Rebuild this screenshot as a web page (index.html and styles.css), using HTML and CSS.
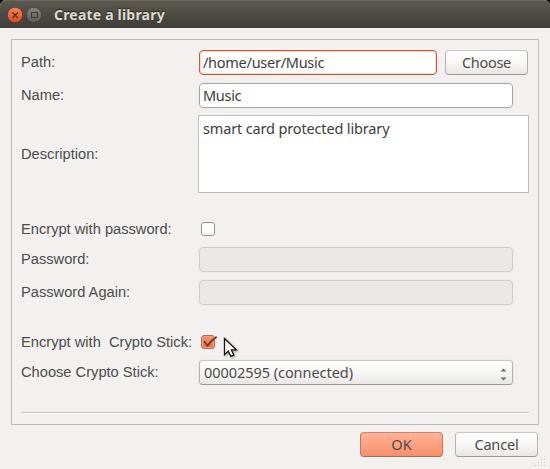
FILE: index.html
```html
<!DOCTYPE html>
<html lang="en">
<head>
<meta charset="utf-8">
<title>Create a library</title>
<link rel="stylesheet" href="styles.css">
</head>
<body>
<div class="window">
  <header class="titlebar">
    <svg class="control" width="16" height="16" viewBox="0 0 16 16">
      <defs>
        <linearGradient id="closeFill" x1="0" y1="0" x2="0" y2="1"><stop offset="0" stop-color="#f3845d"/><stop offset="1" stop-color="#df4b1a"/></linearGradient>
        <linearGradient id="maxFill" x1="0" y1="0" x2="0" y2="1"><stop offset="0" stop-color="#88867e"/><stop offset="1" stop-color="#5c5b55"/></linearGradient>
      </defs>
      <circle cx="8" cy="8" r="7.7" fill="url(#closeFill)" stroke="#34332e" stroke-width=".6"/>
      <path d="M5.5 5.5l5.5 5.5M11 5.5l-5.5 5.5" stroke="#5b2916" stroke-width="1.3"/>
    </svg>
    <svg class="control" width="16" height="16" viewBox="0 0 16 16">
      <circle cx="8" cy="8" r="7.7" fill="url(#maxFill)" stroke="#34332e" stroke-width=".6"/>
      <rect x="5.5" y="5.5" width="6" height="5" fill="none" stroke="#393832"/>
    </svg>
    <h1 class="title">Create a library</h1>
  </header>
  <main class="panel">
    <div class="row path-row"><span class="label">Path:</span><div class="field focused"><span class="path-text">/home/user/Music</span></div><div class="button"><span class="choose-text">Choose</span></div></div>
    <div class="row name-row"><span class="label">Name:</span><div class="field wide"><span class="name-text">Music</span></div></div>
    <div class="row description-row"><span class="label">Description:</span><div class="area"><span class="area-text">smart card protected library</span></div></div>
    <div class="row check-row"><span class="label">Encrypt with password:</span><div class="checkbox"></div></div>
    <div class="row"><span class="label">Password:</span><div class="field wide disabled"></div></div>
    <div class="row again-row"><span class="label">Password Again:</span><div class="field wide disabled"></div></div>
    <div class="row check-row"><span class="label">Encrypt with&nbsp; Crypto Stick:</span><div class="checkbox checked">
      <svg class="tick" width="18" height="16" viewBox="0 0 18 16"><path d="M3 6.3l3.6 4.5Q9.5 6 15.7 1.7" fill="none" stroke="#703a27" stroke-width="1.8"/></svg>
    </div></div>
    <div class="row"><span class="label">Choose Crypto Stick:</span><div class="field wide combo"><span class="combo-text">00002595 (connected)</span>
      <svg class="arrows" width="7" height="13" viewBox="0 0 7 13"><path d="M.5 3.5L3.5.5l3 3zM.5 9.5l3 3 3-3z" fill="#696969"/></svg>
    </div></div>
    <div class="separator"></div>
  </main>
  <footer class="actions">
    <div class="button primary"><span class="ok-text">OK</span></div>
    <div class="button"><span class="cancel-text">Cancel</span></div>
  </footer>
  <svg class="grip" width="11" height="11" viewBox="0 0 11 11"><path d="M9 .5h1M6 3.5h1M9 3.5h1M3 6.5h1M6 6.5h1M9 6.5h1M0 9.5h1M3 9.5h1M6 9.5h1M9 9.5h1" stroke="#cbc9c5"/><path d="M10 1.5h1M7 4.5h1M10 4.5h1M4 7.5h1M7 7.5h1M10 7.5h1" stroke="#fff"/></svg>
  <svg class="pointer" width="16" height="23" viewBox="0 0 16 23"><path d="M1.5 1.5v16.2l3.8-3.6 2.5 5.3 3-1.3-2.4-5.2h4.9z" fill="#fff" stroke="#141414" stroke-width="1.3"/></svg>
</div>
</body>
</html>
```
FILE: styles.css
```css
* { box-sizing: border-box; }
body { margin: 0; background: #000; font: 14.5px/20px "Noto Sans", sans-serif; color: #3c3c3c; }
.window { position: relative; width: 550px; height: 469px; background: #f2f1f0; border-radius: 6px 6px 0 0; overflow: hidden; }
.titlebar { display: flex; align-items: center; height: 28px; padding: 0 0 0 7px; gap: 3px; background: linear-gradient(#5b584f, #3e3d38); border-top: 1px solid #6a675e; }
.control { flex: none; }
.title { margin: 0 0 0 9px; font: bold 14px/20px "Noto Sans", sans-serif; letter-spacing: .2px; color: #dfdbd2; text-shadow: 0 -1px 1px #252420; white-space: nowrap; }
.panel { width: 528px; height: 386px; margin: 11px 0 0 11px; padding: 10px 9px 0; border: 1px solid #bfbdba; }
.row { display: flex; align-items: center; height: 25px; margin-bottom: 8px; }
.label { width: 178px; flex: none; font: 14.667px/17px "Liberation Sans", sans-serif; color: #4c4c4c; white-space: pre; }
.field { display: flex; align-items: center; width: 238px; height: 25px; padding: 0 4px 2px; background: #fff; border: 1px solid #aaa7a3; border-radius: 4px; box-shadow: 0 0 0 1px #eeecea; white-space: nowrap; }
.wide { width: 314px; }
.focused { padding-left: 3px; border-color: #d2562c; box-shadow: inset 0 0 0 1px #f9d9ce; }
.disabled { background: #eae9e8; border-color: #cecdcb; }
.path-text { letter-spacing: -.27px; }
.name-row { margin-bottom: 7px; }
.name-text { margin-left: -1px; letter-spacing: -.3px; }
.description-row { height: 78px; margin-bottom: 29px; }
.area { width: 331px; height: 78px; margin-left: -1px; padding: 2px 4px; background: #fff; border: 1px solid #bfbdba; white-space: nowrap; }
.area-text { letter-spacing: -.15px; }
.check-row { height: 14px; margin-bottom: 11px; }
.checkbox { position: relative; width: 14px; height: 14px; margin-left: 2px; border: 1px solid #9a9189; border-radius: 3px; background: #fff; }
.checked { background: linear-gradient(#f39570, #ee6b3c); border-color: #a9694f; box-shadow: inset 0 0 0 1px #f5a382; }
.tick { position: absolute; left: -1px; top: -1px; }
.again-row { margin-bottom: 30px; }
.button { display: flex; justify-content: center; align-items: center; width: 83px; height: 25px; padding-bottom: 2px; border: 1px solid; border-color: #c8c5c2 #b4b1ae #9d9a96; border-radius: 4px; background: linear-gradient(#fff, #f7f7f6 50%, #e8e7e6); color: #4c4c4c; }
.choose-text { letter-spacing: -.3px; }
.cancel-text { letter-spacing: -.15px; }
.path-row .button { margin-left: 8px; }
.combo { justify-content: space-between; padding: 0 5px 2px 4px; border-color: #c8c5c2 #b4b1ae #9d9a96; background: linear-gradient(#fff, #f6f6f5 50%, #e8e7e6); color: #4c4c4c; }
.combo-text { letter-spacing: -.05px; }
.arrows { margin-top: 6px; }
.separator { height: 2px; margin-top: 27px; background: #fff; border-top: 1px solid #c3c1be; }
.actions { display: flex; justify-content: flex-end; gap: 12px; padding: 7px 12px 0 0; }
.primary { background: linear-gradient(#ffb396, #f98f69); border-color: #c8876f #b77c67 #a36f5d; }
.grip { position: absolute; right: 4px; bottom: 2px; }
.pointer { position: absolute; left: 223px; top: 337px; filter: drop-shadow(1px 1px 1px #0005); }
```
